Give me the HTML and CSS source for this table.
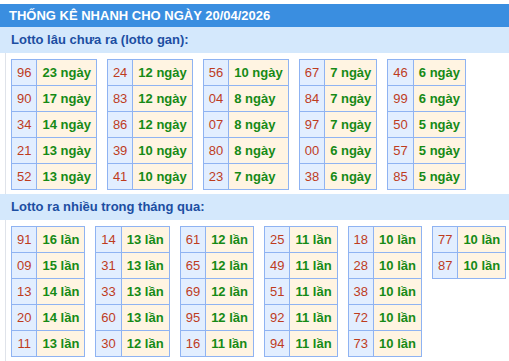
FILE: index.html
```html
<!DOCTYPE html>
<html lang="vi">
<head>
<meta charset="utf-8">
<link rel="stylesheet" href="styles.css">
</head>
<body>
<div class="panel">
  <div class="title">THỐNG KÊ NHANH CHO NGÀY 20/04/2026</div>
  <div class="sub">Lotto lâu chưa ra (lotto gan):</div>
  <div class="grid">
    <table class="t"><tr><td class="n">96</td><td class="v">23 ngày</td></tr><tr><td class="n">90</td><td class="v">17 ngày</td></tr><tr><td class="n">34</td><td class="v">14 ngày</td></tr><tr><td class="n">21</td><td class="v">13 ngày</td></tr><tr><td class="n">52</td><td class="v">13 ngày</td></tr></table>
    <table class="t"><tr><td class="n">24</td><td class="v">12 ngày</td></tr><tr><td class="n">83</td><td class="v">12 ngày</td></tr><tr><td class="n">86</td><td class="v">12 ngày</td></tr><tr><td class="n">39</td><td class="v">10 ngày</td></tr><tr><td class="n">41</td><td class="v">10 ngày</td></tr></table>
    <table class="t"><tr><td class="n">56</td><td class="v">10 ngày</td></tr><tr><td class="n">04</td><td class="v">8 ngày</td></tr><tr><td class="n">07</td><td class="v">8 ngày</td></tr><tr><td class="n">80</td><td class="v">8 ngày</td></tr><tr><td class="n">23</td><td class="v">7 ngày</td></tr></table>
    <table class="t"><tr><td class="n">67</td><td class="v">7 ngày</td></tr><tr><td class="n">84</td><td class="v">7 ngày</td></tr><tr><td class="n">97</td><td class="v">7 ngày</td></tr><tr><td class="n">00</td><td class="v">6 ngày</td></tr><tr><td class="n">38</td><td class="v">6 ngày</td></tr></table>
    <table class="t"><tr><td class="n">46</td><td class="v">6 ngày</td></tr><tr><td class="n">99</td><td class="v">6 ngày</td></tr><tr><td class="n">50</td><td class="v">5 ngày</td></tr><tr><td class="n">57</td><td class="v">5 ngày</td></tr><tr><td class="n">85</td><td class="v">5 ngày</td></tr></table>
  </div>
  <div class="sub">Lotto ra nhiều trong tháng qua:</div>
  <div class="grid">
    <table class="t"><tr><td class="n">91</td><td class="v">16 lần</td></tr><tr><td class="n">09</td><td class="v">15 lần</td></tr><tr><td class="n">13</td><td class="v">14 lần</td></tr><tr><td class="n">20</td><td class="v">14 lần</td></tr><tr><td class="n">11</td><td class="v">13 lần</td></tr></table>
    <table class="t"><tr><td class="n">14</td><td class="v">13 lần</td></tr><tr><td class="n">31</td><td class="v">13 lần</td></tr><tr><td class="n">33</td><td class="v">13 lần</td></tr><tr><td class="n">60</td><td class="v">13 lần</td></tr><tr><td class="n">30</td><td class="v">12 lần</td></tr></table>
    <table class="t"><tr><td class="n">61</td><td class="v">12 lần</td></tr><tr><td class="n">65</td><td class="v">12 lần</td></tr><tr><td class="n">69</td><td class="v">12 lần</td></tr><tr><td class="n">95</td><td class="v">12 lần</td></tr><tr><td class="n">16</td><td class="v">11 lần</td></tr></table>
    <table class="t"><tr><td class="n">25</td><td class="v">11 lần</td></tr><tr><td class="n">49</td><td class="v">11 lần</td></tr><tr><td class="n">51</td><td class="v">11 lần</td></tr><tr><td class="n">92</td><td class="v">11 lần</td></tr><tr><td class="n">94</td><td class="v">11 lần</td></tr></table>
    <table class="t"><tr><td class="n">18</td><td class="v">10 lần</td></tr><tr><td class="n">28</td><td class="v">10 lần</td></tr><tr><td class="n">38</td><td class="v">10 lần</td></tr><tr><td class="n">72</td><td class="v">10 lần</td></tr><tr><td class="n">73</td><td class="v">10 lần</td></tr></table>
    <table class="t"><tr><td class="n">77</td><td class="v">10 lần</td></tr><tr><td class="n">87</td><td class="v">10 lần</td></tr></table>
  </div>
</div>
</body>
</html>
```
FILE: styles.css
```css
html, body {
  margin: 0;
  padding: 0;
  background: #ffffff;
}
body {
  padding-top: 4px;
  font-family: "Liberation Sans", Arial, sans-serif;
  font-size: 13px;
}
.title {
  background: #3a8ee0;
  color: #ffffff;
  font-weight: bold;
  height: 23px;
  line-height: 23px;
  padding-left: 9px;
  white-space: nowrap;
}
.sub {
  background: #d4e8fc;
  color: #1c4ea2;
  font-weight: bold;
  height: 26px;
  line-height: 26px;
  padding-left: 11px;
}
.grid {
  display: flex;
  align-items: flex-start;
  gap: 10px;
  margin-left: 5px;
  border-left: 1px solid #dfe3ea;
  padding: 6px 0 4px 5px;
}
.t {
  border-collapse: collapse;
}
.t td {
  border: 1px solid #8fb3f2;
  height: 25px;
  padding: 0 5px;
  white-space: nowrap;
  line-height: 25px;
  box-sizing: border-box;
}
.t .n {
  background: #e2eeff;
  color: #be3c1e;
  text-align: center;
}
.t .v {
  background: #fff4e2;
  color: #168a16;
  font-weight: bold;
}
```
